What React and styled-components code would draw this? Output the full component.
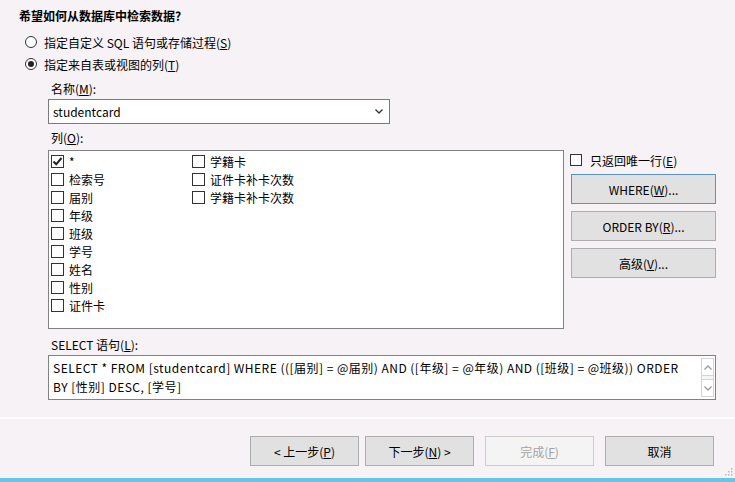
import React from 'react';
import styled, { createGlobalStyle } from 'styled-components';

const GlobalStyle = createGlobalStyle`
  html, body {
    margin: 0;
    padding: 0;
    background: #f6f2f5;
  }
  * {
    box-sizing: border-box;
  }
`;

const Window = styled.div`
  position: relative;
  width: 735px;
  height: 482px;
  overflow: hidden;
  background: #f6f2f5;
  font-family: "Noto Sans CJK SC", "Noto Sans", sans-serif;
  font-size: 12px;
  color: #000;
  display: flex;
  flex-direction: column;
`;

const Content = styled.div`
  padding: 8px 19px 0 19px;
  display: flex;
  flex-direction: column;
`;

const Title = styled.div`
  font-weight: 700;
  line-height: 16px;
  height: 16px;
`;

const RadioRow = styled.label`
  display: flex;
  align-items: center;
  height: 22px;
  padding-left: 6px;
  gap: 7px;
  margin-top: ${p => p.$first ? '7px' : '0'};
`;

const RadioDot = styled.span`
  width: 12px;
  height: 12px;
  border-radius: 50%;
  border: 1px solid #333;
  background: #fff;
  display: flex;
  align-items: center;
  justify-content: center;
  &::after {
    content: '';
    width: 6px;
    height: 6px;
    border-radius: 50%;
    background: ${p => p.$checked ? '#222' : 'transparent'};
  }
`;

const Indented = styled.div`
  padding-left: 29px;
  display: flex;
  flex-direction: column;
`;

const FieldLabel = styled.div`
  line-height: 16px;
  height: 16px;
  padding-left: 3px;
  margin-top: ${p => p.$top || 6}px;
  margin-bottom: ${p => p.$bottom || 2}px;
`;

const Select = styled.div`
  width: 342px;
  height: 25px;
  border: 1px solid #7a7a7a;
  background: #fff;
  display: flex;
  align-items: center;
  justify-content: space-between;
  padding: 0 6px 0 4px;
`;

const ColumnsRow = styled.div`
  display: flex;
  gap: 6px;
`;

const ListBox = styled.div`
  width: 516px;
  height: 179px;
  border: 1px solid #828282;
  background: #fff;
  padding: 1px 0 0 2px;
  display: grid;
  grid-auto-flow: column;
  grid-template-rows: repeat(9, 18px);
  grid-template-columns: 141px 200px;
  align-content: start;
`;

const CheckItem = styled.div`
  display: flex;
  align-items: center;
  gap: 5px;
  white-space: nowrap;
`;

const Box = styled.span`
  width: ${p => p.$size || 13}px;
  height: ${p => p.$size || 13}px;
  border: 1px solid #333;
  background: #fff;
  display: flex;
  align-items: center;
  justify-content: center;
  flex: none;
`;

const SidePanel = styled.div`
  width: 146px;
  display: flex;
  flex-direction: column;
`;

const SideCheck = styled.div`
  display: flex;
  align-items: center;
  gap: 8px;
  height: 20px;
  margin-bottom: 4px;
`;

const Button = styled.button`
  font-family: inherit;
  font-size: 12px;
  width: ${p => p.$width || 109}px;
  height: 30px;
  margin: 0;
  padding: 0;
  border: 1px solid ${p => p.$disabled ? '#cccccc' : p.$focused ? '#5a92c8' : '#adadad'};
  background: ${p => p.$disabled ? '#f4f4f4' : '#e1e1e1'};
  color: ${p => p.$disabled ? '#a3a3a3' : '#000'};
  display: flex;
  align-items: center;
  justify-content: center;
`;

const SideButton = styled(Button)`
  margin-left: 1px;
  margin-bottom: 7px;
`;

const SqlBox = styled.div`
  width: 668px;
  height: 45px;
  border: 1px solid #828282;
  background: #fff;
  display: flex;
`;

const SqlText = styled.div`
  flex: 1;
  padding: 2px 0 0 4px;
  line-height: 19px;
  white-space: nowrap;
  letter-spacing: 0.48px;
`;

const ScrollBar = styled.div`
  width: 13px;
  margin: 2px 1px 2px 0;
  display: flex;
  flex-direction: column;
  justify-content: space-between;
  border: 1px solid #d4d4d4;
  background: #f6f6f6;
`;

const ScrollArrow = styled.div`
  height: 17px;
  display: flex;
  align-items: center;
  justify-content: center;
  background: #fff;
  border-${p => p.$down ? 'top' : 'bottom'}: 1px solid #d4d4d4;
`;

const Separator = styled.div`
  margin-top: 17px;
  height: 2px;
  background: #ffffff;
`;

const Footer = styled.div`
  display: flex;
  justify-content: flex-end;
  gap: 11px;
  padding-right: 21px;
  margin-top: 17px;
`;

const ButtonPair = styled.div`
  display: flex;
  gap: 6px;
`;

const AccentBar = styled.div`
  margin-top: auto;
  height: 4px;
  background: #6ac4e4;
`;

const Grip = styled.svg`
  position: absolute;
  right: 2px;
  bottom: 6px;
`;

const Chevron = ({ up, color = '#333' }) => (
  <svg width="8" height="5" viewBox="0 0 8 5">
    <path
      d={up ? 'M0.5 4.5 L4 1 L7.5 4.5' : 'M0.5 0.5 L4 4 L7.5 0.5'}
      fill="none"
      stroke={color}
      strokeWidth="1.3"
    />
  </svg>
);

const columns = ['*', '检索号', '届别', '年级', '班级', '学号', '姓名', '性别', '证件卡', '学籍卡', '证件卡补卡次数', '学籍卡补卡次数'];

export default function App() {
  return (
    <>
      <GlobalStyle />
      <Window>
        <Content>
          <Title>希望如何从数据库中检索数据?</Title>
          <RadioRow $first>
            <RadioDot />
            <span>指定自定义 SQL 语句或存储过程(<u>S</u>)</span>
          </RadioRow>
          <RadioRow>
            <RadioDot $checked />
            <span>指定来自表或视图的列(<u>T</u>)</span>
          </RadioRow>
          <Indented>
            <FieldLabel>名称(<u>M</u>):</FieldLabel>
            <Select>
              <span>studentcard</span>
              <Chevron />
            </Select>
            <FieldLabel $bottom={4}>列(<u>O</u>):</FieldLabel>
            <ColumnsRow>
              <ListBox>
                {columns.map((c, i) => (
                  <CheckItem key={c}>
                    <Box>
                      {i === 0 && (
                        <svg width="11" height="11" viewBox="0 0 11 11">
                          <path d="M1.5 5.5 L4.2 8.3 L9.5 2" fill="none" stroke="#222" strokeWidth="2" />
                        </svg>
                      )}
                    </Box>
                    <span>{c}</span>
                  </CheckItem>
                ))}
              </ListBox>
              <SidePanel>
                <SideCheck>
                  <Box $size={12} />
                  <span>只返回唯一行(<u>E</u>)</span>
                </SideCheck>
                <SideButton $width={145} $focused>WHERE(<u>W</u>)...</SideButton>
                <SideButton $width={145}>ORDER BY(<u>R</u>)...</SideButton>
                <SideButton $width={145}>高级(<u>V</u>)...</SideButton>
              </SidePanel>
            </ColumnsRow>
            <FieldLabel $top={8}>SELECT 语句(<u>L</u>):</FieldLabel>
            <SqlBox>
              <SqlText>
                SELECT * FROM [studentcard] WHERE (([届别] = @届别) AND ([年级] = @年级) AND ([班级] = @班级)) ORDER
                <br />
                BY [性别] DESC, [学号]
              </SqlText>
              <ScrollBar>
                <ScrollArrow><Chevron up color="#9a9a9a" /></ScrollArrow>
                <ScrollArrow $down><Chevron color="#9a9a9a" /></ScrollArrow>
              </ScrollBar>
            </SqlBox>
          </Indented>
        </Content>
        <Separator />
        <Footer>
          <ButtonPair>
            <Button>&lt; 上一步(<u>P</u>)</Button>
            <Button>下一步(<u>N</u>) &gt;</Button>
          </ButtonPair>
          <Button $disabled>完成(<u>F</u>)</Button>
          <Button>取消</Button>
        </Footer>
        <AccentBar />
        <Grip width="8" height="8" viewBox="0 0 8 8">
          {[[6, 0], [3, 3], [6, 3], [0, 6], [3, 6], [6, 6]].map(([x, y]) => (
            <rect key={`${x}-${y}`} x={x} y={y} width="1.5" height="1.5" fill="#b8b8b8" />
          ))}
        </Grip>
      </Window>
    </>
  );
}
